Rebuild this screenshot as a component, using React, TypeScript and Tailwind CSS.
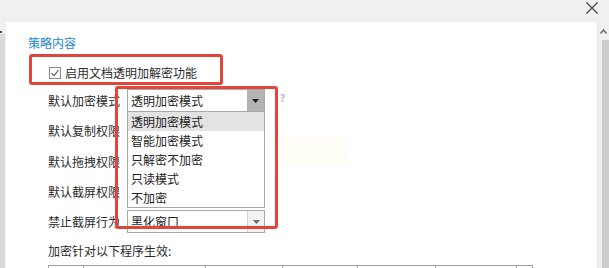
import React from "react";

const font = { fontFamily: '"Noto Sans CJK SC", "Noto Sans", sans-serif' };

function Caret({ dark }: { dark?: boolean }) {
  return (
    <svg width="7" height="4" viewBox="0 0 7 4">
      <path d="M0 0H7L3.5 4Z" fill={dark ? "#1a1a1a" : "#6b6b6b"} />
    </svg>
  );
}

function Select({ text, active }: { text: string; active?: boolean }) {
  return (
    <div className="flex h-[23px] w-[138px] border border-[#a9a9a9] bg-white">
      <div className="flex-1 pl-[3px] text-[12px] leading-[21px] text-[#222]">{text}</div>
      <div
        className={
          active
            ? "flex w-[17px] items-center justify-center bg-[#b3b3b3]"
            : "flex w-[17px] items-center justify-center border-l border-[#d0d0d0] bg-[#f2f2f2]"
        }
      >
        <Caret dark={active} />
      </div>
    </div>
  );
}

const options = ["透明加密模式", "智能加密模式", "只解密不加密", "只读模式", "不加密"];

function Row({ label, children, top }: { label: string; children?: React.ReactNode; top: string }) {
  return (
    <div className={`flex h-[23px] items-center ${top}`}>
      <div className="w-[79px] text-[12px] leading-[16px] text-[#2b2b2b] whitespace-nowrap">{label}</div>
      {children}
    </div>
  );
}

export default function App() {
  const cols = [35, 122, 77, 75, 78, 81, 17];
  return (
    <div className="relative h-[268px] w-[609px] overflow-hidden bg-[#f0f0f0]" style={font}>
      {/* title bar */}
      <div className="flex h-[22px] items-start justify-end pr-[11px] pt-[2px]">
        <svg width="12" height="12" viewBox="0 0 12 12">
          <path d="M0.5 0.5L11.5 11.5M11.5 0.5L0.5 11.5" stroke="#3c3c3c" strokeWidth="1.1" />
        </svg>
      </div>
      <div className="flex h-[246px]">
        {/* left strip */}
        <div className="flex w-[6px] flex-col">
          <div className="h-[9px]" />
          <div className="h-[2px] w-[2px] bg-[#444]" />
          <div className="mt-[1px] w-[5px] flex-1 bg-[#d9d9d9]" />
        </div>
        {/* white panel */}
        <div className="relative flex-1 bg-white">
          <div className="pl-[22px] pt-[13px] text-[12px] leading-[16px] text-[#1a86d2]">策略内容</div>
          <div className="mt-[14px] flex items-center pl-[43px]">
            <div className="flex h-[12px] w-[12px] items-center justify-center border border-[#8a8a8a] bg-white">
              <svg width="10" height="10" viewBox="0 0 10 10">
                <path d="M1.5 5.2L4 7.6L8.6 2" fill="none" stroke="#555" strokeWidth="1.1" />
              </svg>
            </div>
            <span className="ml-[4px] text-[12px] leading-[16px] text-[#2b2b2b]">启用文档透明加解密功能</span>
          </div>
          <div className="pl-[42px]">
            <Row label="默认加密模式" top="mt-[8px]">
              <div className="relative z-10">
                <Select text="透明加密模式" active />
                <div className="absolute left-0 top-full w-[138px] border border-t-0 border-[#a9a9a9] bg-white">
                  {options.map((o, i) => (
                    <div
                      key={o}
                      className={
                        i === 0
                          ? "h-[19px] bg-[#e3e3e3] pl-[3px] text-[12px] leading-[19px] text-[#222]"
                          : "h-[19px] pl-[3px] text-[12px] leading-[19px] text-[#222]"
                      }
                    >
                      {o}
                    </div>
                  ))}
                </div>
              </div>
              <div className="ml-[15px] mt-[-6px] text-[10px] font-bold leading-[10px] text-[#b8b8b8]">?</div>
            </Row>
            <Row label="默认复制权限" top="mt-[7px]">
              <Select text="" />
              <div className="ml-[14px] mt-[40px] h-[29px] w-[70px] bg-[#fffef6]" />
            </Row>
            <Row label="默认拖拽权限" top="mt-[8px]">
              <Select text="" />
            </Row>
            <Row label="默认截屏权限" top="mt-[7px]">
              <Select text="" />
            </Row>
            <Row label="禁止截屏行为" top="mt-[7px]">
              <Select text="黑化窗口" />
            </Row>
            <div className="mt-[10px] text-[12px] leading-[16px] text-[#2b2b2b]">加密针对以下程序生效:</div>
            <div className="mt-[6px] flex">
              {cols.map((w, i) => (
                <div
                  key={i}
                  className={
                    i === cols.length - 1
                      ? "h-[10px] border-l border-r border-t border-[#a0a0a0]"
                      : "h-[10px] border-l border-t border-[#a0a0a0]"
                  }
                  style={{ width: w }}
                />
              ))}
            </div>
          </div>
        </div>
        {/* scrollbar */}
        <div className="flex w-[12px] flex-col border-l border-[#e6e6e6] bg-[#f0f0f0]">
          <div className="flex h-[18px] items-center justify-end pr-[2px]">
            <svg width="7" height="5" viewBox="0 0 7 5">
              <path d="M0.5 4.5L3.5 1L6.5 4.5" fill="none" stroke="#606060" strokeWidth="1.3" />
            </svg>
          </div>
          <div className="ml-[4px] flex-1 bg-[#cdcdcd]" />
        </div>
      </div>
      {/* annotation boxes */}
      <div className="pointer-events-none absolute left-[29px] top-[54px] h-[31px] w-[194px] rounded-[3px] border-[3px] border-[#e2463a]" />
      <div className="pointer-events-none absolute left-[115px] top-[86px] h-[143px] w-[163px] rounded-[3px] border-[3px] border-[#e2463a]" />
    </div>
  );
}
